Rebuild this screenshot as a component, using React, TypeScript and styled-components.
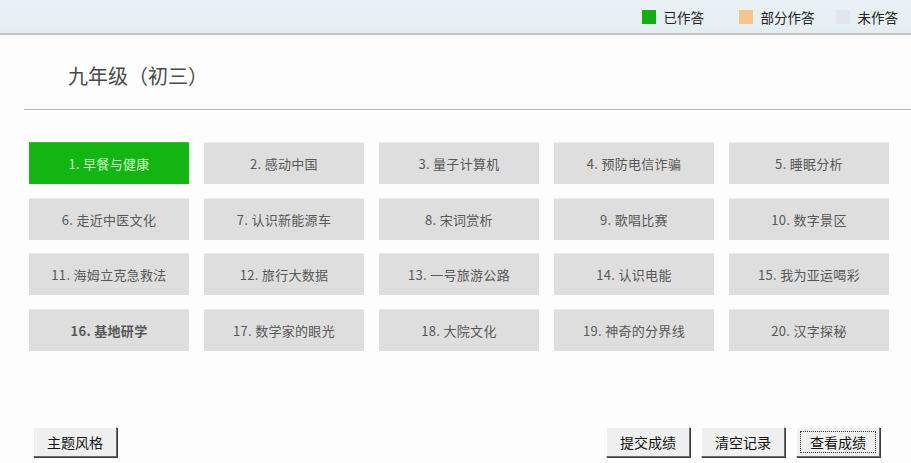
import styled, { createGlobalStyle } from 'styled-components';

const GlobalStyle = createGlobalStyle`
  html, body {
    margin: 0;
    padding: 0;
    background: #fdfdfd;
    font-family: "Liberation Sans", "Noto Sans CJK SC", sans-serif;
  }
  * { box-sizing: border-box; }
`;

const Page = styled.div`
  width: 911px;
  height: 463px;
  display: flex;
  flex-direction: column;
  overflow: hidden;
`;

const TopBar = styled.div`
  height: 35px;
  flex-shrink: 0;
  background: linear-gradient(to bottom, #e9f1f6, #e4eef0);
  border-bottom: 2px solid #c4c4c4;
  display: flex;
  justify-content: flex-end;
  align-items: center;
  padding-right: 13px;
`;

const LegendItem = styled.div`
  display: flex;
  align-items: center;
  gap: 8px;
  min-width: 97px;
  font-size: 13.5px;
  color: #222;
  font-family: "Noto Sans CJK SC", sans-serif;
  &:last-child {
    min-width: 0;
  }
`;

const Swatch = styled.span<{ $color: string }>`
  width: 14px;
  height: 14px;
  background: ${(p) => p.$color};
`;

const Content = styled.div`
  flex: 1;
  display: flex;
  flex-direction: column;
  padding-left: 24px;
`;

const TitleBox = styled.div`
  height: 75px;
  display: flex;
  align-items: center;
  padding: 6px 0 0 44px;
  border-bottom: 1px solid #b8b8b8;
`;

const Title = styled.h1`
  margin: 0;
  font-size: 20px;
  font-weight: 400;
  color: #4a4a4a;
  font-family: "Noto Sans CJK SC", sans-serif;
`;

const Grid = styled.div`
  display: grid;
  grid-template-columns: repeat(5, 160px);
  grid-auto-rows: 42px;
  column-gap: 15px;
  row-gap: 13.5px;
  padding: 32px 0 0 5px;
`;

const Topic = styled.div<{ $done?: boolean; $bold?: boolean }>`
  display: flex;
  align-items: center;
  justify-content: center;
  background: ${(p) => (p.$done ? '#12b512' : '#dedede')};
  border-top: 1px solid ${(p) => (p.$done ? '#2ac42a' : '#ebebeb')};
  color: ${(p) => (p.$done ? '#c8f5c0' : '#585858')};
  font-size: 13px;
  font-weight: ${(p) => (p.$bold ? 700 : 400)};
  font-family: "Noto Sans CJK SC", sans-serif;
  letter-spacing: 0.3px;
`;

const Footer = styled.div`
  margin-top: auto;
  display: flex;
  align-items: center;
  padding: 0 31px 6px 33px;
`;

const Spacer = styled.div`
  flex: 1;
`;

const ButtonGroup = styled.div`
  display: flex;
  gap: 11px;
`;

const WinButton = styled.button<{ $focused?: boolean }>`
  width: 84px;
  height: 30px;
  background: #efefef;
  border: 1px solid;
  border-color: #fff #6b6b6b #6b6b6b #fff;
  box-shadow: 1px 1px 0 #3a3a3a;
  font-size: 14px;
  color: #111;
  font-family: "Noto Sans CJK SC", sans-serif;
  padding: 0;
  outline: ${(p) => (p.$focused ? '1px dotted #333' : 'none')};
  outline-offset: -5px;
`;

const topics = [
  '早餐与健康', '感动中国', '量子计算机', '预防电信诈骗', '睡眠分析',
  '走近中医文化', '认识新能源车', '宋词赏析', '歌唱比赛', '数字景区',
  '海姆立克急救法', '旅行大数据', '一号旅游公路', '认识电能', '我为亚运喝彩',
  '基地研学', '数学家的眼光', '大院文化', '神奇的分界线', '汉字探秘',
];

export default function App() {
  return (
    <Page>
      <GlobalStyle />
      <TopBar>
        <LegendItem>
          <Swatch $color="#10b010" />
          已作答
        </LegendItem>
        <LegendItem>
          <Swatch $color="#f5c58d" />
          部分作答
        </LegendItem>
        <LegendItem>
          <Swatch $color="#e2e4ee" />
          未作答
        </LegendItem>
      </TopBar>
      <Content>
        <TitleBox>
          <Title>九年级（初三）</Title>
        </TitleBox>
        <Grid>
          {topics.map((t, i) => (
            <Topic key={t} $done={i === 0} $bold={i === 15}>
              {i + 1}. {t}
            </Topic>
          ))}
        </Grid>
      </Content>
      <Footer>
        <WinButton>主题风格</WinButton>
        <Spacer />
        <ButtonGroup>
          <WinButton>提交成绩</WinButton>
          <WinButton>清空记录</WinButton>
          <WinButton $focused>查看成绩</WinButton>
        </ButtonGroup>
      </Footer>
    </Page>
  );
}
